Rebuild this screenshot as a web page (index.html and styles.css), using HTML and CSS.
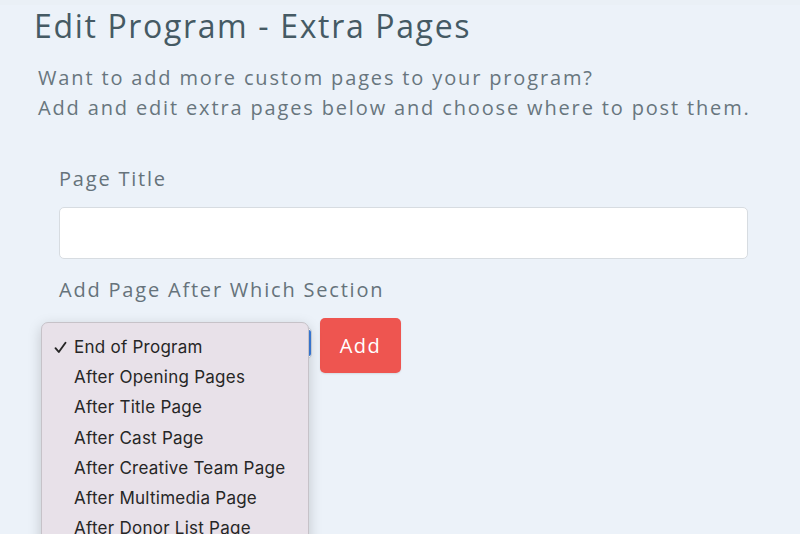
FILE: index.html
```html
<!DOCTYPE html>
<html>
<head>
<meta charset="utf-8">
<link rel="stylesheet" href="styles.css">
</head>
<body>
<div class="topband"></div>
<main class="page">
  <h1 class="title">Edit Program - Extra Pages</h1>
  <p class="intro">Want to add more custom pages to your program?<br>Add and edit extra pages below and choose where to post them.</p>
  <section class="form">
    <label class="label">Page Title</label>
    <div class="input"></div>
    <label class="label label-section">Add Page After Which Section</label>
    <div class="select-row">
      <div class="select"><span class="focus"></span></div>
      <button class="btn">Add</button>
    </div>
  </section>
</main>
<ul class="menu">
  <li class="item selected"><svg class="check" width="13" height="13" viewBox="0 0 13 13"><path d="M1.5 7.2 L4.8 11 L11.5 1.8" fill="none" stroke="#262626" stroke-width="1.9" stroke-linecap="round" stroke-linejoin="round"/></svg>End of Program</li>
  <li class="item">After Opening Pages</li>
  <li class="item">After Title Page</li>
  <li class="item">After Cast Page</li>
  <li class="item">After Creative Team Page</li>
  <li class="item">After Multimedia Page</li>
  <li class="item">After Donor List Page</li>
</ul>
</body>
</html>
```
FILE: styles.css
```css
html, body {
  margin: 0;
  padding: 0;
  background: #ecf2f9;
  height: 100%;
  overflow: hidden;
}
body {
  position: relative;
  font-family: "Open Sans", "Noto Sans", sans-serif;
}
.topband {
  height: 5px;
  background: #eaf0f6;
}
.page {
  padding: 0 0 0 34px;
}
.title {
  margin: 0;
  font-size: 32px;
  line-height: 42px;
  font-weight: 400;
  color: #455a64;
  letter-spacing: 1.65px;
}
.intro {
  margin: 16px 0 0 4px;
  font-size: 20px;
  line-height: 30px;
  color: #68767e;
  letter-spacing: 1.85px;
}
.form {
  margin: 42px 0 0 25px;
  width: 689px;
}
.label {
  display: block;
  font-size: 20px;
  line-height: 28px;
  color: #66737b;
  letter-spacing: 1.8px;
}
.input {
  margin-top: 14px;
  height: 50px;
  background: #ffffff;
  border: 1px solid #d7dce1;
  border-radius: 5px;
}
.label-section {
  margin-top: 17px;
}
.select-row {
  display: flex;
  align-items: flex-start;
  gap: 8px;
  margin-top: 14px;
}
.select {
  width: 251px;
  height: 30px;
  margin-top: 9px;
  border-radius: 5px;
  background: #ffffff;
  border: 1px solid #cfd6de;
  position: relative;
}
.focus {
  position: absolute;
  right: 0;
  top: 2px;
  width: 4px;
  height: 26px;
  background: #3b7ddd;
  border-radius: 2px;
}
.btn {
  width: 81px;
  height: 55px;
  border: 0;
  border-radius: 5px;
  background: #ee5550;
  color: #ffffff;
  font-family: "Open Sans", sans-serif;
  font-size: 20px;
  letter-spacing: 1.5px;
  box-shadow: 0 1px 2px rgba(0,0,0,0.1);
}
.menu {
  position: absolute;
  left: 41px;
  top: 322px;
  width: 266px;
  height: 240px;
  margin: 0;
  padding: 9px 0 0 0;
  list-style: none;
  background: #e8e1e9;
  border: 1px solid #c6c2c8;
  border-radius: 7px;
  box-shadow: 0 4px 14px rgba(0,0,0,0.18);
  font-family: "Inter", "Liberation Sans", sans-serif;
  font-size: 17px;
  letter-spacing: 0.25px;
  color: #262626;
}
.item {
  height: 30.2px;
  line-height: 30px;
  padding-left: 32px;
  position: relative;
}
.check {
  position: absolute;
  left: 12px;
  top: 9px;
}
```
